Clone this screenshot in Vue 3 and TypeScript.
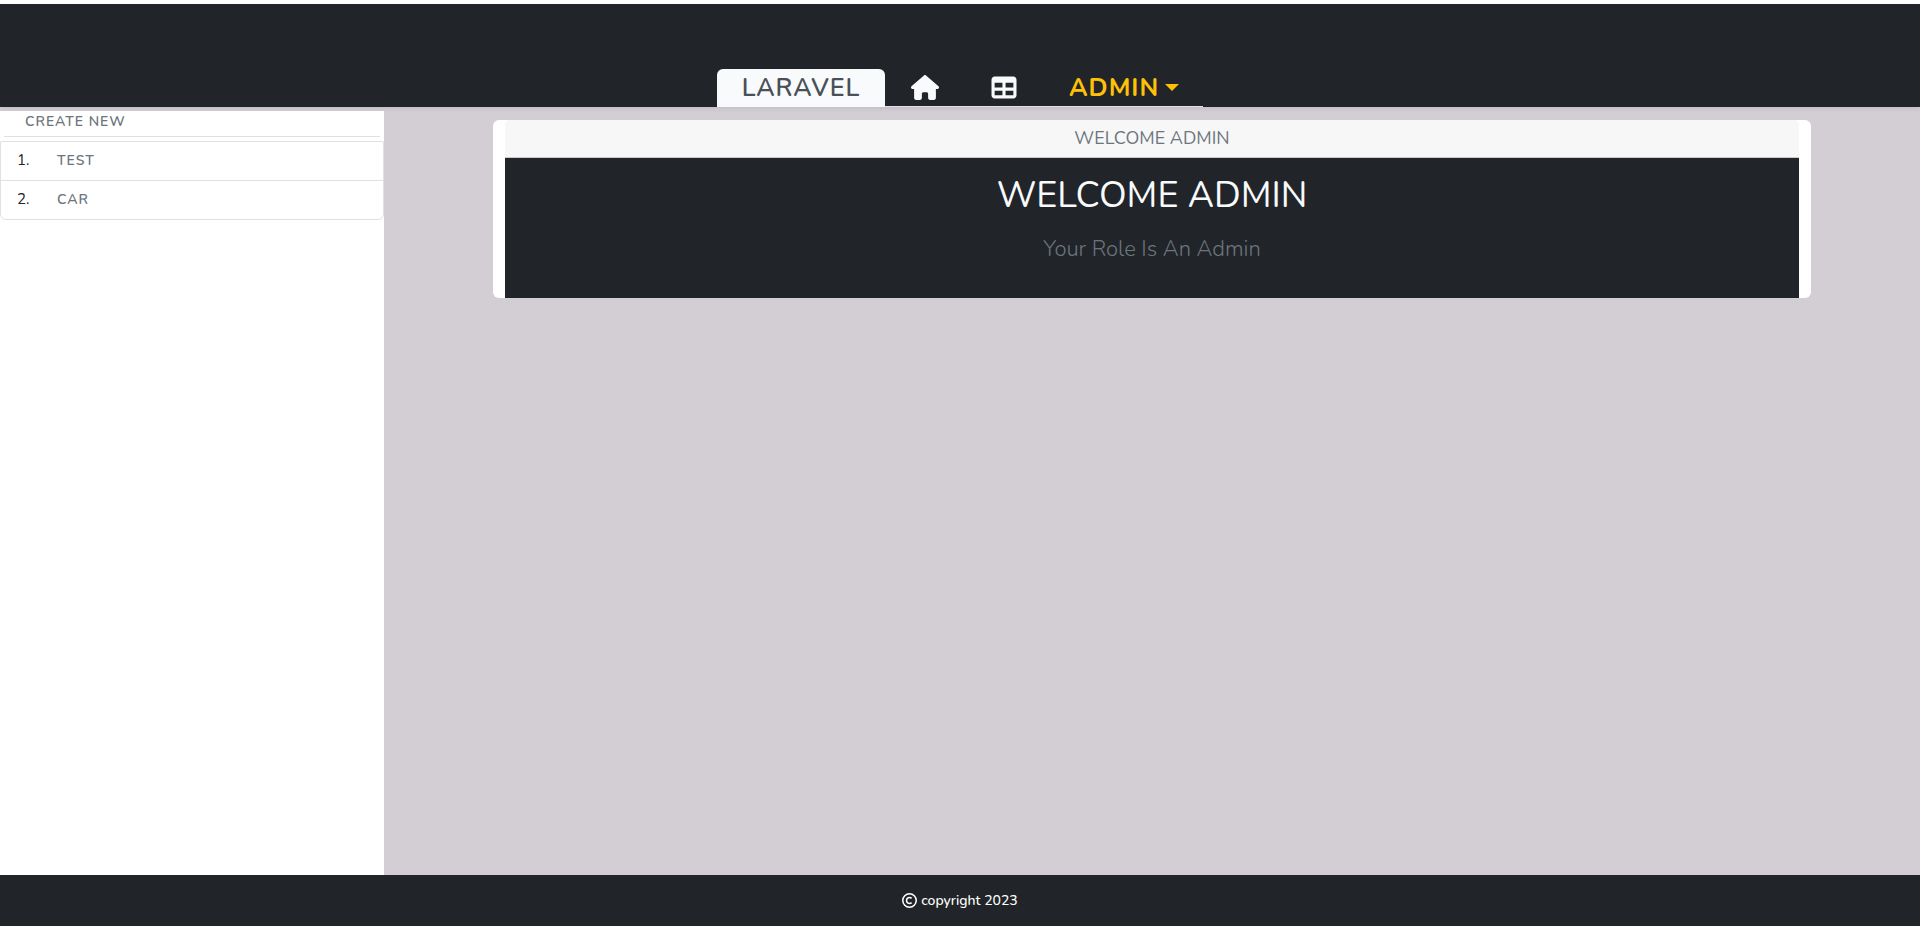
<script setup lang="ts">
interface Category {
  id: number
  name: string
}

const categories: Category[] = [
  { id: 1, name: 'TEST' },
  { id: 2, name: 'CAR' },
]
</script>

<template>
  <div class="page">
    <header class="topbar">
      <nav class="tabs" aria-label="Main">
        <a class="tab active" href="#">LARAVEL</a>
        <a class="tab icon" href="#" aria-label="Home">
          <svg class="home" viewBox="0 0 576 512" aria-hidden="true">
            <path d="M575.8 255.5c0 18-15 32.1-32 32.1h-32l.7 160.2c0 2.700-.2 5.400-.5 8.100V472c0 22.100-17.900 40-40 40H456c-1.100 0-2.200 0-3.300-.1-1.400.1-2.800.1-4.200.1H416 392c-22.100 0-40-17.900-40-40V448 384c0-17.700-14.300-32-32-32H256c-17.700 0-32 14.300-32 32v64 24c0 22.100-17.900 40-40 40H160 128.100c-1.500 0-3-.1-4.500-.2-1.200.1-2.400.2-3.600.2H104c-22.100 0-40-17.900-40-40V287.600H32c-18 0-32-14-32-32.100 0-9 3-17 10-24L266.400 8c7-7 15-8 22-8s15 2 21 7L564.800 231.500c8 7 12 15 11 24z" />
          </svg>
        </a>
        <a class="tab icon" href="#" aria-label="Table">
          <svg class="grid" viewBox="0 0 512 512" aria-hidden="true">
            <path fill-rule="evenodd" d="M64 32h384c35.300 0 64 28.700 64 64v320c0 35.300-28.700 64-64 64H64c-35.300 0-64-28.700-64-64V96c0-35.300 28.700-64 64-64zM64 160v96h160v-96zm224 0v96h160v-96zM64 320v96h160v-96zm224 0v96h160v-96z" />
          </svg>
        </a>
        <button class="tab user" type="button" aria-haspopup="true">
          ADMIN<span class="caret"></span>
        </button>
      </nav>
    </header>

    <div class="body">
      <aside class="sidebar">
        <a class="create" href="#">CREATE NEW</a>
        <ul class="list">
          <li v-for="category in categories" :key="category.id">
            <span class="number">{{ category.id }}.</span>
            <a href="#">{{ category.name }}</a>
          </li>
        </ul>
      </aside>

      <main class="content">
        <section class="card">
          <div class="card-header">WELCOME ADMIN</div>
          <div class="card-body">
            <h1>WELCOME ADMIN</h1>
            <p>Your Role Is An Admin</p>
          </div>
        </section>
      </main>
    </div>

    <footer class="footer">
      <svg viewBox="0 0 512 512" aria-hidden="true">
        <circle cx="256" cy="256" r="230" />
        <path d="M328 328a102 102 0 1 1 0-144" />
      </svg>
      <span>copyright 2023</span>
    </footer>
  </div>
</template>

<style>
body {
  margin: 0;
}
</style>

<style scoped>
.page,
.page * {
  box-sizing: border-box;
}

.page {
  display: flex;
  flex-direction: column;
  min-height: 100vh;
  border-top: 4px solid #fff;
  background: #d3ced4;
  color: #212529;
  font-family: Nunito, Lato, sans-serif;
  font-size: 14px;
}

a {
  color: inherit;
  text-decoration: none;
}

.topbar {
  display: flex;
  justify-content: center;
  align-items: flex-end;
  height: 103px;
  background: #212529;
  box-shadow: 0 2px 4px rgba(0, 0, 0, 0.075);
}

.tabs {
  display: flex;
  border-bottom: 1px solid #dee2e6;
}

.tab {
  display: flex;
  align-items: center;
  height: 38px;
  margin-bottom: -1px;
  padding: 0 26px;
  border: 0;
  border-bottom: 1px solid #dee2e6;
  background: none;
  color: #f8fafc;
  font: inherit;
  font-size: 25px;
  font-weight: 600;
  letter-spacing: 1px;
}

.tab.active {
  width: 168px;
  justify-content: center;
  padding: 0;
  border-color: #f8fafc;
  border-radius: 6px 6px 0 0;
  background: #f8fafc;
  color: #495057;
}

.tab.icon {
  padding-bottom: 1px;
}

.tab svg {
  display: block;
  fill: #f8fafc;
}

.home {
  width: 28px;
  height: 25px;
}

.grid {
  width: 26px;
  height: 25px;
}

.tab.user {
  width: 160px;
  color: #ffc107;
  font-weight: 700;
}

.caret {
  margin-left: 6px;
  border-top: 7px solid #ffc107;
  border-right: 7px solid transparent;
  border-left: 7px solid transparent;
}

.body {
  display: flex;
  flex: 1;
}

.sidebar {
  width: 20%;
  margin-top: 4px;
  background: #fff;
}

.create {
  display: block;
  margin: 0 4px;
  padding: 0 21px 4px;
  border-bottom: 1px solid #dee2e6;
  color: #6c757d;
  font-weight: 600;
  line-height: 21px;
  letter-spacing: 1px;
}

.list {
  margin: 4px 0 0;
  padding: 0;
  border: 1px solid #dee2e6;
  border-radius: 0 0 6px 6px;
  list-style: none;
}

.list li {
  display: flex;
  align-items: center;
  height: 38px;
  padding: 0 16px 2px;
}

.list li + li {
  height: 39px;
  border-top: 1px solid #dee2e6;
}

.number {
  width: 40px;
  font-size: 15px;
}

.list a {
  color: #6c757d;
  font-weight: 600;
  letter-spacing: 1px;
}

.content {
  flex: 1;
  padding: 13px 16px 0;
}

.card {
  max-width: 1318px;
  margin: 0 auto;
  padding: 0 12px;
  border-radius: 6px;
  background: #fff;
  text-align: center;
}

.card-header {
  height: 38px;
  border-bottom: 1px solid #c8cacb;
  border-radius: 5px 5px 0 0;
  background: #f7f7f7;
  color: #6c757d;
  font-size: 18px;
  line-height: 36px;
}

.card-body {
  padding: 16px 16px 32px;
  background: #212529;
}

h1 {
  margin: 0 0 16px;
  color: #f8fafc;
  font-size: 36px;
  font-weight: 400;
  line-height: 43px;
}

p {
  margin: 0;
  color: #6c757d;
  font-size: 22px;
  font-weight: 300;
  line-height: 33px;
}

.footer {
  display: flex;
  justify-content: center;
  align-items: center;
  gap: 4px;
  height: 51px;
  background: #212529;
  color: #fff;
  font-weight: 500;
}

.footer svg {
  width: 15px;
  height: 15px;
  fill: none;
  stroke: #fff;
  stroke-width: 52;
}
</style>
